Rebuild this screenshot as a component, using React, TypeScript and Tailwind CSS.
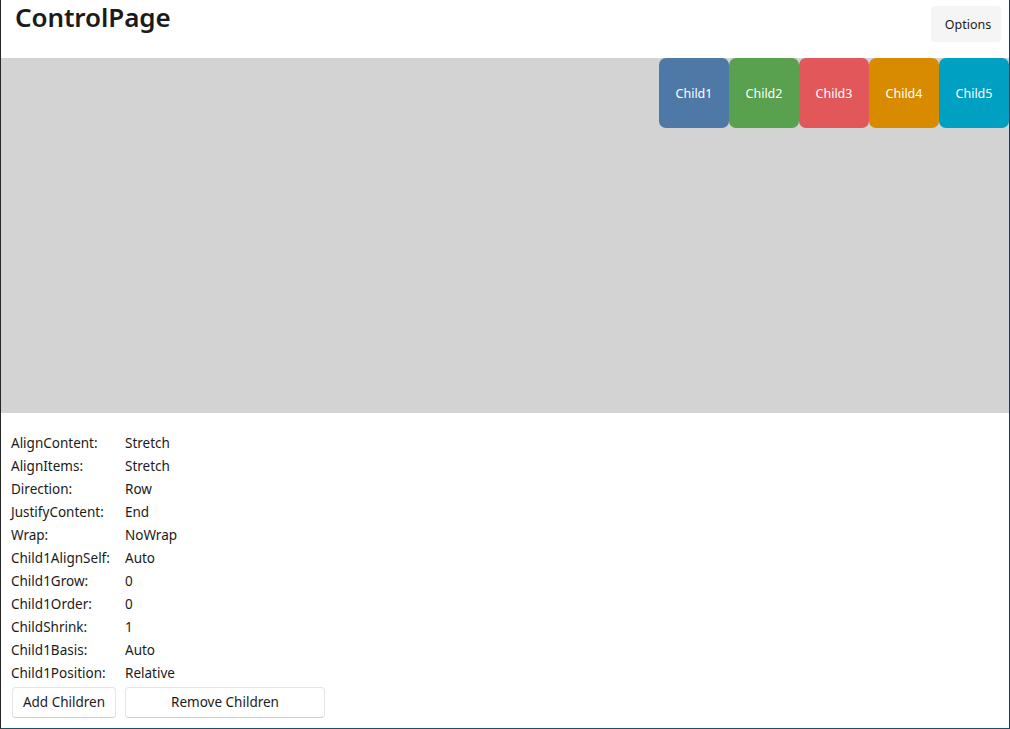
import React from 'react'

const children = [
  { label: 'Child1', color: 'bg-[#4e78a6]' },
  { label: 'Child2', color: 'bg-[#59a14f]' },
  { label: 'Child3', color: 'bg-[#e1575a]' },
  { label: 'Child4', color: 'bg-[#d98b00]' },
  { label: 'Child5', color: 'bg-[#00a0c3]' },
]

const props: [string, string][] = [
  ['AlignContent:', 'Stretch'],
  ['AlignItems:', 'Stretch'],
  ['Direction:', 'Row'],
  ['JustifyContent:', 'End'],
  ['Wrap:', 'NoWrap'],
  ['Child1AlignSelf:', 'Auto'],
  ['Child1Grow:', '0'],
  ['Child1Order:', '0'],
  ['ChildShrink:', '1'],
  ['Child1Basis:', 'Auto'],
  ['Child1Position:', 'Relative'],
]

export default function App() {
  return (
    <div
      className="w-[1010px] h-[729px] bg-white text-[#1b1b1b] border-l border-l-[#262626] border-r border-r-[#1e3a5c] border-b border-b-[#1d4e6c] flex flex-col overflow-hidden"
      style={{ fontFamily: '"Segoe UI", "Noto Sans", sans-serif' }}
    >
      <header className="h-[58px] flex items-start justify-between pl-[14px] pr-[8px]">
        <h1 className="text-[26px] font-semibold leading-[34px] tracking-[-0.1px]">ControlPage</h1>
        <button className="mt-[6px] w-[70px] h-[36px] pt-[2px] rounded-[4px] bg-[#f5f5f5] text-[12.5px] text-[#1b1b1b] pl-[4px]">
          Options
        </button>
      </header>

      <div className="h-[355px] bg-[#d3d3d3] flex justify-end items-start">
        {children.map((c) => (
          <div
            key={c.label}
            className={`${c.color} w-[70px] h-[70px] pt-[2px] rounded-[7px] flex items-center justify-center text-white text-[12.5px]`}
          >
            {c.label}
          </div>
        ))}
      </div>

      <div className="pt-[19px] pl-[10px] flex flex-col">
        {props.map(([k, v]) => (
          <div key={k} className="flex h-[23px] items-center text-[13.5px] leading-none">
            <span className="w-[114px]">{k}</span>
            <span>{v}</span>
          </div>
        ))}
        <div className="flex gap-[9px] mt-[2px] ml-[1px]">
          <button className="w-[104px] h-[31px] rounded-[4px] border border-[#e5e5e5] border-b-[#d0d0d0] bg-white text-[13.5px]">
            Add Children
          </button>
          <button className="w-[200px] h-[31px] rounded-[4px] border border-[#e5e5e5] border-b-[#d0d0d0] bg-white text-[13.5px]">
            Remove Children
          </button>
        </div>
      </div>
    </div>
  )
}
